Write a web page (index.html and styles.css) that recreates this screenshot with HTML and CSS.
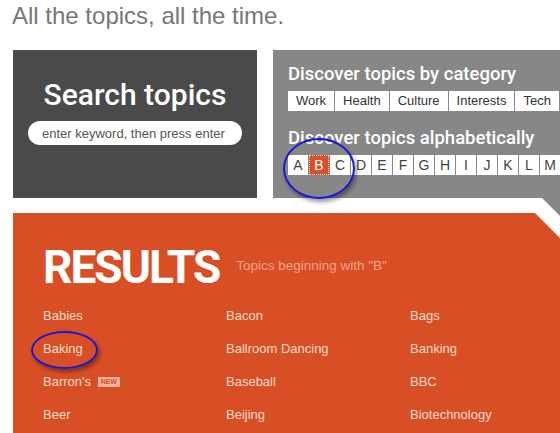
FILE: index.html
```html
<!DOCTYPE html>
<html lang="en">
	<head>
		<meta charset="UTF-8" />
		<meta name="viewport" content="width=device-width, initial-scale=1.0" />
		<title>Topics</title>
		<link rel="stylesheet" href="styles.css">
	</head>
	<body>
		<h1 class="tagline">All the topics, all the time.</h1>

		<div class="panels">
			<div class="search-box">
				<h2 class="search-title">Search topics</h2>
				<input class="search-input" type="text" placeholder="enter keyword, then press enter" />
			</div>

			<div class="discover">
				<h3 class="discover-title">Discover topics by category</h3>
				<ul class="tabs">
					<li><a href="#">Work</a></li>
					<li><a href="#">Health</a></li>
					<li><a href="#">Culture</a></li>
					<li><a href="#">Interests</a></li>
					<li><a href="#">Tech</a></li>
				</ul>

				<h3 class="discover-title">Discover topics alphabetically</h3>
				<ul class="tabs letters">
					<li><a href="#">A</a></li>
					<li><a href="#" class="active">B</a></li>
					<li><a href="#">C</a></li>
					<li><a href="#">D</a></li>
					<li><a href="#">E</a></li>
					<li><a href="#">F</a></li>
					<li><a href="#">G</a></li>
					<li><a href="#">H</a></li>
					<li><a href="#">I</a></li>
					<li><a href="#">J</a></li>
					<li><a href="#">K</a></li>
					<li><a href="#">L</a></li>
					<li><a href="#">M</a></li>
				</ul>
			</div>
		</div>

		<div class="results">
			<div class="results-head">
				<h2 class="results-title">RESULTS</h2>
				<span class="results-sub">Topics beginning with "B"</span>
			</div>
			<ul class="topic-list">
				<li><a href="#">Babies</a></li>
				<li><a href="#">Bacon</a></li>
				<li><a href="#">Bags</a></li>
				<li><a href="#">Baking</a></li>
				<li><a href="#">Ballroom Dancing</a></li>
				<li><a href="#">Banking</a></li>
				<li><a href="#">Barron's</a> <span class="badge">NEW</span></li>
				<li><a href="#">Baseball</a></li>
				<li><a href="#">BBC</a></li>
				<li><a href="#">Beer</a></li>
				<li><a href="#">Beijing</a></li>
				<li><a href="#">Biotechnology</a></li>
			</ul>
		</div>

		<!-- annotation circles drawn over the screenshot -->
		<span class="mark mark-letters"></span>
		<span class="mark mark-baking"></span>
	</body>
</html>
```

FILE: styles.css
```css
body {
	font-family: "Liberation Sans", Arial, sans-serif;
	background-color: #fff;
	margin: 0;
	padding: 0;
	overflow: hidden;
	position: relative;
	height: 433px;
}

ul {
	list-style: none;
	margin: 0;
	padding: 0;
}

a {
	text-decoration: none;
	color: inherit;
}

.tagline {
	margin: 0;
	padding: 2px 0 0 12px;
	font-size: 24px;
	font-weight: normal;
	line-height: 28px;
	color: #777;
}

.panels {
	display: flex;
	align-items: flex-start;
	gap: 16px;
	margin-top: 20px;
	padding-left: 13px;
}

.search-box {
	width: 244px;
	height: 148px;
	flex-shrink: 0;
	background-color: #4a4a4a;
	display: flex;
	flex-direction: column;
	align-items: center;
	box-sizing: border-box;
	padding-top: 27px;
}

.search-title {
	margin: 0 0 8px;
	font-family: Roboto, sans-serif;
	font-weight: 500;
	font-size: 30px;
	line-height: 36px;
	color: #fff;
}

.search-input {
	width: 214px;
	height: 24px;
	border: none;
	border-radius: 12px;
	padding: 0 14px;
	box-sizing: border-box;
	font-family: "Liberation Sans", Arial, sans-serif;
	font-size: 13px;
	outline: none;
}

.search-input::placeholder {
	color: #555;
}

.discover {
	flex: 1;
	min-width: 0;
	height: 148px;
	position: relative;
	background-color: #878787;
	box-sizing: border-box;
	padding: 13px 0 0 15px;
}

/* little pointer dropping down to the results */
.discover::after {
	content: "";
	position: absolute;
	top: 100%;
	right: 0;
	width: 18px;
	height: 18px;
	background-color: #878787;
	clip-path: polygon(0 0, 100% 0, 100% 100%);
}

.discover-title {
	margin: 0 0 6px;
	font-family: Roboto, sans-serif;
	font-weight: 500;
	font-size: 18.5px;
	line-height: 22px;
	color: #fff;
}

.tabs {
	display: flex;
	gap: 1px;
	margin-bottom: 16px;
	overflow: hidden;
	white-space: nowrap;
}

.tabs a {
	display: block;
	background-color: #fff;
	color: #333;
	font-size: 13px;
	line-height: 20px;
	padding: 0 8px;
}

.letters a {
	width: 20px;
	padding: 0;
	text-align: center;
	font-size: 14px;
	color: #444;
}

.letters a.active {
	background-color: #d84f26;
	color: #fff;
	outline: 1px dotted #ddd;
	outline-offset: -1px;
}

.results {
	margin: 15px 0 0 13px;
	height: 220px;
	background-color: #d84f26;
	clip-path: polygon(0 0, calc(100% - 25px) 0, 100% 25px, 100% 100%, 0 100%);
	padding: 31px 0 0 30px;
	box-sizing: border-box;
}

.results-head {
	display: flex;
	align-items: flex-start;
	gap: 17px;
	margin-bottom: 9px;
}

.results-title {
	margin: 0;
	font-family: Roboto, sans-serif;
	font-weight: 700;
	font-size: 46px;
	line-height: 46px;
	letter-spacing: -2px;
	color: #fff;
}

.results-sub {
	margin-top: 14px;
	font-size: 13.5px;
	color: #f0a587;
}

.topic-list {
	display: grid;
	grid-template-columns: 183px 184px 1fr;
	grid-auto-rows: 33px;
	font-size: 13px;
	line-height: 33px;
	color: #fbdccd;
}

.badge {
	display: inline-block;
	margin-left: 3px;
	padding: 0 3px;
	background-color: #f4b3a2;
	color: #d84f26;
	font-size: 7px;
	font-weight: bold;
	line-height: 10px;
	vertical-align: 2px;
}

.mark {
	position: absolute;
	border: 2px solid #1818d6;
	border-radius: 50%;
	box-shadow: 2px 3px 4px rgba(0, 0, 0, 0.4);
	box-sizing: border-box;
}

.mark-letters {
	left: 283px;
	top: 138px;
	width: 72px;
	height: 61px;
}

.mark-baking {
	left: 31px;
	top: 331px;
	width: 67px;
	height: 38px;
}
```
